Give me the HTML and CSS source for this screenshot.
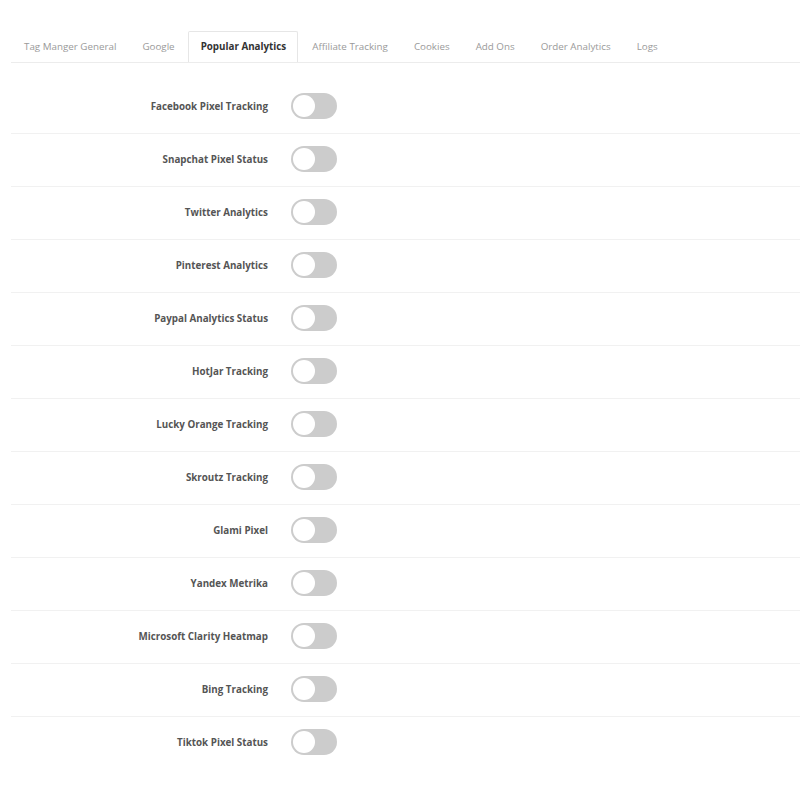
FILE: index.html
```html
<!DOCTYPE html>
<html>
<head>
<meta charset="utf-8">
<link rel="stylesheet" href="styles.css">
</head>
<body>
<div class="page">
  <ul class="tabs">
    <li class="tab">Tag Manger General</li>
    <li class="tab">Google</li>
    <li class="tab active">Popular Analytics</li>
    <li class="tab">Affiliate Tracking</li>
    <li class="tab">Cookies</li>
    <li class="tab">Add Ons</li>
    <li class="tab">Order Analytics</li>
    <li class="tab">Logs</li>
  </ul>
  <div class="settings">
    <div class="row"><span class="label">Facebook Pixel Tracking</span><span class="toggle"><span class="knob"></span></span></div>
    <div class="row"><span class="label">Snapchat Pixel Status</span><span class="toggle"><span class="knob"></span></span></div>
    <div class="row"><span class="label">Twitter Analytics</span><span class="toggle"><span class="knob"></span></span></div>
    <div class="row"><span class="label">Pinterest Analytics</span><span class="toggle"><span class="knob"></span></span></div>
    <div class="row"><span class="label">Paypal Analytics Status</span><span class="toggle"><span class="knob"></span></span></div>
    <div class="row"><span class="label">HotJar Tracking</span><span class="toggle"><span class="knob"></span></span></div>
    <div class="row"><span class="label">Lucky Orange Tracking</span><span class="toggle"><span class="knob"></span></span></div>
    <div class="row"><span class="label">Skroutz Tracking</span><span class="toggle"><span class="knob"></span></span></div>
    <div class="row"><span class="label">Glami Pixel</span><span class="toggle"><span class="knob"></span></span></div>
    <div class="row"><span class="label">Yandex Metrika</span><span class="toggle"><span class="knob"></span></span></div>
    <div class="row"><span class="label">Microsoft Clarity Heatmap</span><span class="toggle"><span class="knob"></span></span></div>
    <div class="row"><span class="label">Bing Tracking</span><span class="toggle"><span class="knob"></span></span></div>
    <div class="row"><span class="label">Tiktok Pixel Status</span><span class="toggle"><span class="knob"></span></span></div>
  </div>
</div>
</body>
</html>
```

FILE: styles.css
```css
html, body {
  margin: 0;
  padding: 0;
  background: #fff;
}
.page {
  padding: 31px 0 0 11px;
  font-family: "Open Sans", "DejaVu Sans", sans-serif;
}
.tabs {
  list-style: none;
  margin: 0;
  padding: 0;
  display: flex;
  gap: 1px;
  border-bottom: 1px solid #ececec;
  height: 31px;
}
.tab {
  padding: 0 11px 0 12px;
  font-size: 9.8px;
  color: #9a9a9a;
  line-height: 30px;
  border: 1px solid transparent;
  border-bottom: none;
  border-radius: 2px 2px 0 0;
}
.tab.active {
  color: #333;
  font-weight: 700;
  background: #fff;
  border-color: #e6e6e6;
  height: 31px;
  box-sizing: border-box;
}
.settings {
  padding-top: 18px;
}
.row {
  display: grid;
  grid-template-columns: 257px auto;
  column-gap: 23px;
  align-items: center;
  padding: 12px 0 14px;
  border-bottom: 1px solid #f1f1f1;
}
.row:last-child {
  border-bottom: none;
}
.label {
  text-align: right;
  font-size: 9.8px;
  font-weight: 700;
  color: #555;
}
.toggle {
  display: block;
  width: 46px;
  height: 26px;
  border-radius: 13px;
  background: #cccccc;
  position: relative;
}
.knob {
  position: absolute;
  left: 2px;
  top: 2px;
  width: 22px;
  height: 22px;
  border-radius: 50%;
  background: #fff;
}
```
